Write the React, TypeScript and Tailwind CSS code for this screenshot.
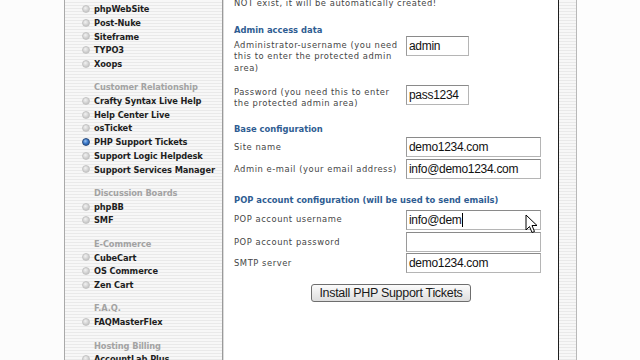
import React from 'react';

type Row = { label: string; kind: 'item' | 'head'; active?: boolean };

const sidebar: Row[] = [
  { label: 'phpNuke', kind: 'item' },
  { label: 'phpWebSite', kind: 'item' },
  { label: 'Post-Nuke', kind: 'item' },
  { label: 'Siteframe', kind: 'item' },
  { label: 'TYPO3', kind: 'item' },
  { label: 'Xoops', kind: 'item' },
  { label: 'Customer Relationship', kind: 'head' },
  { label: 'Crafty Syntax Live Help', kind: 'item' },
  { label: 'Help Center Live', kind: 'item' },
  { label: 'osTicket', kind: 'item' },
  { label: 'PHP Support Tickets', kind: 'item', active: true },
  { label: 'Support Logic Helpdesk', kind: 'item' },
  { label: 'Support Services Manager', kind: 'item' },
  { label: 'Discussion Boards', kind: 'head' },
  { label: 'phpBB', kind: 'item' },
  { label: 'SMF', kind: 'item' },
  { label: 'E-Commerce', kind: 'head' },
  { label: 'CubeCart', kind: 'item' },
  { label: 'OS Commerce', kind: 'item' },
  { label: 'Zen Cart', kind: 'item' },
  { label: 'F.A.Q.', kind: 'head' },
  { label: 'FAQMasterFlex', kind: 'item' },
  { label: 'Hosting Billing', kind: 'head' },
  { label: 'AccountLab Plus', kind: 'item' },
];

const stripes =
  'bg-[repeating-linear-gradient(to_bottom,#f7f7f7_0px,#f7f7f7_2px,#e9e9e9_2px,#e9e9e9_3px)]';

const Bullet = ({ active }: { active?: boolean }) =>
  active ? (
    <span className="w-[8px] h-[8px] rounded-full bg-[radial-gradient(circle_at_40%_35%,#9cc4f0_0%,#3b78c8_45%,#1d4f96_100%)] border border-[#27497a] shrink-0" />
  ) : (
    <span className="w-[8px] h-[8px] rounded-full bg-[radial-gradient(circle_at_40%_35%,#f2f2f2_0%,#cfcfcf_60%,#b8b8b8_100%)] border border-[#c4c4c4] shrink-0" />
  );

const Sidebar = () => (
  <div className={`w-[157px] shrink-0 ${stripes} pl-[17px] font-['DejaVu_Sans_Condensed','DejaVu_Sans',sans-serif] text-[9.2px] tracking-[-0.1px] font-bold whitespace-nowrap`}>
    <div className="-mt-[11.5px]">
      {sidebar.map((r, i) =>
        r.kind === 'head' ? (
          <div key={i} className="h-[13.7px] mt-[9.8px] pl-[12px] flex items-center text-[#a3a3a3]">
            {r.label}
          </div>
        ) : (
          <div key={i} className="h-[13.7px] flex items-center gap-[4px] text-[#1e1e1e]">
            <Bullet active={r.active} />
            <span>{r.label}</span>
          </div>
        )
      )}
    </div>
  </div>
);

const Input = ({ value, wide, caret }: { value: string; wide?: boolean; caret?: boolean }) => (
  <div
    className={`${wide ? 'w-[135px]' : 'w-[63px]'} h-[20px] bg-white border border-[#b5b5b5] border-t-[#8a8a8a] border-l-[#9a9a9a] pl-[2px] flex items-center font-['Liberation_Sans',Arial,sans-serif] text-[12px] tracking-[-0.3px] text-[#111]`}
  >
    {value}
    {caret && <span className="inline-block w-[1px] h-[14px] bg-black ml-[1px]" />}
  </div>
);

const Heading = ({ children, className }: { children: React.ReactNode; className?: string }) => (
  <div className={`h-[12px] leading-[12px] font-bold tracking-[0px] text-[#2f5d92] whitespace-nowrap ${className ?? ''}`}>{children}</div>
);

const Content = () => (
  <div className="w-[334px] shrink-0 bg-white pl-[10px] relative font-['DejaVu_Sans_Condensed','DejaVu_Sans',sans-serif] text-[9.3px] text-[#454545] tracking-[0.55px]">
    <div className="-mt-[14.25px] leading-[11.5px] whitespace-nowrap">
      <div>Name of the MySQL database. If the database does</div>
      <div>NOT exist, it will be automatically created!</div>
    </div>

    <Heading className="mt-[15.25px]">Admin access data</Heading>
    <div className="grid grid-cols-[172px_1fr]">
      <div className="pt-[2.5px] leading-[11.5px] whitespace-nowrap">
        Administrator-username (you need
        <br />
        this to enter the protected admin
        <br />
        area)
      </div>
      <Input value="admin" />
    </div>

    <div className="grid grid-cols-[172px_1fr] mt-[12.25px]">
      <div className="pt-[0.5px] leading-[11.5px] whitespace-nowrap">
        Password (you need this to enter
        <br />
        the protected admin area)
      </div>
      <Input value="pass1234" />
    </div>

    <Heading className="mt-[14.5px]">Base configuration</Heading>
    <div className="grid grid-cols-[172px_1fr] items-center mt-[2px]">
      <div>Site name</div>
      <Input value="demo1234.com" wide />
    </div>
    <div className="grid grid-cols-[172px_1fr] items-center mt-[2px]">
      <div className="whitespace-nowrap">Admin e-mail (your email address)</div>
      <Input value="info@demo1234.com" wide />
    </div>

    <Heading className="mt-[15px]">POP account configuration (will be used to send emails)</Heading>
    <div className="grid grid-cols-[172px_1fr] items-center mt-[4px]">
      <div className="-mt-[3px]">POP account username</div>
      <Input value="info@dem" wide caret />
    </div>
    <div className="grid grid-cols-[172px_1fr] items-center mt-[2px]">
      <div>POP account password</div>
      <Input value="" wide />
    </div>
    <div className="grid grid-cols-[172px_1fr] items-center mt-[1px]">
      <div>SMTP server</div>
      <Input value="demo1234.com" wide />
    </div>

    <div className="flex justify-center mt-[11px] pr-[10px]">
      <button className="h-[18px] px-[7px] rounded-[3px] border border-[#6e6e6e] bg-[linear-gradient(to_bottom,#fbfbfb,#dedede)] font-['Liberation_Sans',Arial,sans-serif] text-[12.5px] tracking-[-0.3px] leading-none text-[#1a1a1a]">
        Install PHP Support Tickets
      </button>
    </div>

    <svg className="absolute left-[301px] top-[214px]" width="13" height="20" viewBox="0 0 13 20">
      <path d="M1 1 L1 16 L4.5 12.5 L7 18.5 L9.5 17.5 L7 11.5 L12 11.5 Z" fill="#fff" stroke="#000" strokeWidth="1" strokeLinejoin="round" />
    </svg>
  </div>
);

export default function App() {
  return (
    <div className="w-[640px] h-[360px] overflow-hidden flex bg-white">
      <div className="w-[64px] shrink-0 bg-[#fcfcfc]" />
      <div className="w-[1px] shrink-0 bg-[#a9a9a9]" />
      <Sidebar />
      <div className="w-[1px] shrink-0 bg-[#9a9a9a]" />
      <div className="w-[1px] shrink-0 bg-[#dcdcdc]" />
      <Content />
      <div className="w-[1px] shrink-0 bg-[#1e1e1e]" />
      <div className={`w-[17px] shrink-0 ${stripes}`} />
      <div className="w-[1px] shrink-0 bg-[#b8b8b8]" />
      <div className="flex-1 bg-[#fdfdfd]" />
    </div>
  );
}
